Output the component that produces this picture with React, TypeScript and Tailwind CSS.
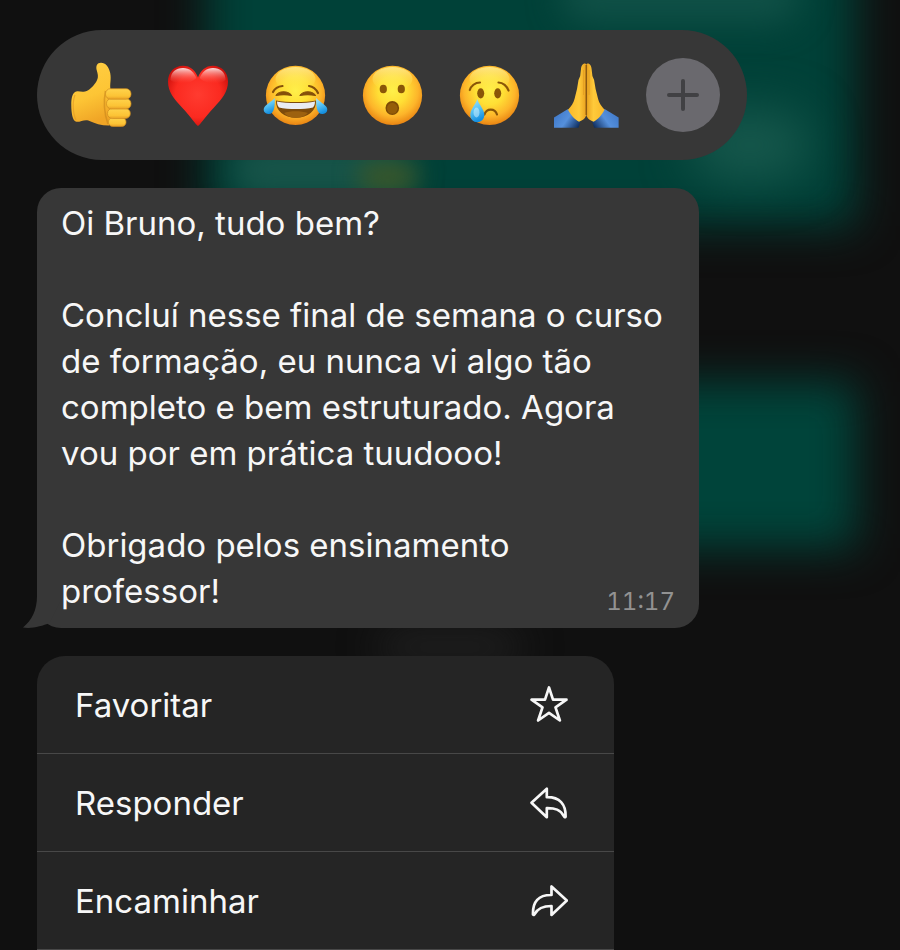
import React from 'react';

interface IconProps {
    className?: string;
}

const Face: React.FC<{ id: string; children: React.ReactNode }> = ({ id, children }) => (
    <svg className="w-[72px] h-[72px]" viewBox="0 0 72 72" fill="none" aria-hidden="true">
        <defs>
            <radialGradient id={`${id}-base`} cx="0.5" cy="0.42" r="0.6">
                <stop offset="0" stopColor="#fff04a" />
                <stop offset="0.4" stopColor="#ffdf35" />
                <stop offset="0.72" stopColor="#fdb52a" />
                <stop offset="1" stopColor="#e67e10" />
            </radialGradient>
            <linearGradient id={`${id}-shine`} x1="0" y1="0" x2="0" y2="1">
                <stop offset="0" stopColor="#fff3a0" stopOpacity="0.75" />
                <stop offset="1" stopColor="#ffe94a" stopOpacity="0" />
            </linearGradient>
            <linearGradient id={`${id}-tear`} x1="0" y1="0" x2="0.3" y2="1">
                <stop offset="0" stopColor="#a8e6ff" />
                <stop offset="0.5" stopColor="#5cc5f5" />
                <stop offset="1" stopColor="#1690e0" />
            </linearGradient>
        </defs>
        <circle cx="36.5" cy="36.4" r="29.6" fill={`url(#${id}-base)`} />
        <ellipse cx="36.5" cy="20" rx="20" ry="12" fill={`url(#${id}-shine)`} />
        {children}
    </svg>
);

const ThumbsUp = () => (
    <svg className="w-[72px] h-[72px]" viewBox="0 0 72 72" fill="none" aria-hidden="true">
        <defs>
            <linearGradient id="thumb-skin" x1="0" y1="0" x2="0.3" y2="1">
                <stop offset="0" stopColor="#ffcf45" />
                <stop offset="0.6" stopColor="#fdc535" />
                <stop offset="1" stopColor="#f0a526" />
            </linearGradient>
            <linearGradient id="thumb-finger" x1="0" y1="0" x2="0" y2="1">
                <stop offset="0" stopColor="#ffd34c" />
                <stop offset="0.7" stopColor="#fcc335" />
                <stop offset="1" stopColor="#e79f25" />
            </linearGradient>
        </defs>
        <path
            d="M36 3.700C32 3.700 30.600 7 31.800 11.500C33.500 17 33.500 20 30 24.500C26.500 29 23 32.500 18.500 32.800C15 33 12.500 31.500 10 33C7 35 6.300 40 6.300 46C6.300 54 7.500 61 10.700 62.500C14 63.800 19 60 23.300 61.500C30 64.500 36 66.500 44 66.500L50 62L52 31L45.500 30C44.500 25 46.500 21 45.200 14C43.800 7.500 40.500 3.700 36 3.700Z"
            fill="url(#thumb-skin)"
        />
        <path d="M10 36C7.500 42 7.500 54 11 61" stroke="#e29b25" strokeWidth="1.2" opacity="0.7" />
        <path d="M40.500 32C38.500 42 39.500 55 43 65" stroke="#c8851b" strokeWidth="1.6" opacity="0.6" />
        <rect x="43.500" y="58.500" width="17.500" height="9" rx="4.300" fill="url(#thumb-finger)" stroke="#d08d20" strokeWidth="0.700" />
        <rect x="42.500" y="49.500" width="22.800" height="10" rx="4.800" fill="url(#thumb-finger)" stroke="#d08d20" strokeWidth="0.700" />
        <rect x="41.500" y="39.500" width="24.500" height="10.500" rx="5" fill="url(#thumb-finger)" stroke="#d08d20" strokeWidth="0.700" />
        <rect x="40.500" y="29.700" width="25.500" height="10.500" rx="5" fill="url(#thumb-finger)" stroke="#d08d20" strokeWidth="0.700" />
    </svg>
);

const Heart = () => (
    <svg className="w-[72px] h-[72px]" viewBox="0 0 72 72" fill="none" aria-hidden="true">
        <defs>
            <radialGradient id="heart-base" cx="0.5" cy="0.48" r="0.58">
                <stop offset="0" stopColor="#ff3b30" />
                <stop offset="0.65" stopColor="#fb2a20" />
                <stop offset="1" stopColor="#cd100c" />
            </radialGradient>
            <linearGradient id="heart-shine" x1="0" y1="0" x2="0" y2="1">
                <stop offset="0" stopColor="#fff" stopOpacity="0.85" />
                <stop offset="1" stopColor="#ff5a4e" stopOpacity="0" />
            </linearGradient>
        </defs>
        <path
            d="M36 67C34 66 28.500 57.500 20 48.500C12 40 6 33 6 22.500C6 13 12.500 6.700 21 6.700C28.500 6.700 33.500 11.500 36 18.500C38.500 11.500 43.500 6.700 51 6.700C59.500 6.700 66 13 66 22.500C66 33 60 40 52 48.500C43.500 57.500 38 66 36 67Z"
            fill="url(#heart-base)"
        />
        <path d="M8.500 21C8.500 13 14 9 21 9C27.500 9 32 13 34.300 19C29 25 14 26 8.500 21Z" fill="url(#heart-shine)" />
        <path d="M37.700 19C40 13 44.500 9 51 9C58 9 63.500 13 63.500 21C58 26 43 25 37.700 19Z" fill="url(#heart-shine)" />
    </svg>
);

const Joy = () => (
    <Face id="joy">
        <g stroke="#85500a" strokeWidth="2.200" strokeLinecap="round">
            <path d="M14 33C15.500 30 19 27.500 23.500 27" />
            <path d="M50 27C54 27.500 57 30 59 34" />
        </g>
        <path d="M17 36.500C20 31.500 29 31.500 32.500 36.500C28 35.500 22 35.500 17 36.500Z" fill="#85500a" stroke="#85500a" strokeWidth="1.200" strokeLinejoin="round" />
        <path d="M41 36.500C44.500 31.500 53 31.500 56.500 36.500C52 35.500 45.500 35.500 41 36.500Z" fill="#85500a" stroke="#85500a" strokeWidth="1.200" strokeLinejoin="round" />
        <path d="M17 41.500C28 43.500 46 43.500 57 41.500C57.500 52 49 58.800 37 58.800C25 58.800 16.500 52 17 41.500Z" fill="#7c4a0b" />
        <path d="M25 54C31 51.500 42 51.500 49 54C42 60.500 31 60.500 25 54Z" fill="#9c610f" />
        <path d="M18 42.500C28 44.500 46 44.500 56 42.500C56 45 55.300 47 54 48.500C45 50.500 29 50.500 20 48.500C18.700 47 18 45 18 42.500Z" fill="#e9ebf2" />
        <path d="M15.800 39C16 47 15.500 55 9.500 55C5.500 55 3.500 51 5.500 48C7.500 45 12 43 15.800 39Z" fill="url(#joy-tear)" />
        <path d="M57.200 39C57 47 57.500 55 63.500 55C67.500 55 69.500 51 67.500 48C65.500 45 61 43 57.200 39Z" fill="url(#joy-tear)" />
    </Face>
);

const Surprised = () => (
    <Face id="surprised">
        <ellipse cx="27.300" cy="30" rx="3.600" ry="4.300" fill="#8a5608" />
        <ellipse cx="45.300" cy="30" rx="3.600" ry="4.300" fill="#8a5608" />
        <ellipse cx="36.300" cy="49" rx="6.800" ry="7" fill="#7c4a06" />
        <ellipse cx="36.300" cy="49.300" rx="5.300" ry="5.500" fill="#955d08" />
    </Face>
);

const Crying = () => (
    <Face id="crying">
        <g stroke="#8a5608" strokeWidth="2.200" strokeLinecap="round">
            <path d="M16.800 31C18 27 22 23.500 27 23.500" />
            <path d="M45.500 23.500C50 23.500 54 27 55.500 31.500" />
            <path d="M31.500 55.500C33.500 49 42 49 44 55.500" />
        </g>
        <ellipse cx="27.700" cy="34.300" rx="3.500" ry="5.100" fill="#8a5608" />
        <ellipse cx="44.700" cy="34.300" rx="3.500" ry="5.100" fill="#8a5608" />
        <path d="M24.300 40C26 46 31.300 50 31.300 56C31.300 60.500 28 63.200 24.300 63.200C20.500 63.200 17.300 60.500 17.300 56C17.300 50 22.500 46 24.300 40Z" fill="url(#crying-tear)" />
        <ellipse cx="23.500" cy="53.500" rx="3" ry="5" fill="#dcf5ff" opacity="0.5" />
    </Face>
);

const FoldedHands = () => (
    <svg className="w-[72px] h-[72px]" viewBox="0 0 72 72" fill="none" aria-hidden="true">
        <defs>
            <linearGradient id="hands-skin" x1="0" y1="0" x2="1" y2="0">
                <stop offset="0" stopColor="#f9b82a" />
                <stop offset="0.6" stopColor="#ffca3a" />
                <stop offset="1" stopColor="#e9a01e" />
            </linearGradient>
            <linearGradient id="hands-sleeve" x1="0" y1="0.3" x2="1" y2="0.8">
                <stop offset="0" stopColor="#3f78c8" />
                <stop offset="0.5" stopColor="#5590dc" />
                <stop offset="1" stopColor="#102f60" />
            </linearGradient>
            <g id="hands-half">
                <path d="M18 50L4 58.500V68.700H28.500L30.500 62.500Z" fill="url(#hands-sleeve)" />
                <path d="M35 4.500C32.500 4.500 31.200 7 31 10L30.200 17L28.500 21L27 30L24.500 40C23.500 44 21 47.500 18 50.800C20.500 55.500 24.500 60.500 29 62.800C33.500 61 36.500 58.500 36.500 54V7C36.500 5.500 36 4.500 35 4.500Z" fill="url(#hands-skin)" />
            </g>
        </defs>
        <use href="#hands-half" />
        <use href="#hands-half" transform="matrix(-1 0 0 1 72.600 0)" />
        <path d="M36.300 6V56" stroke="#8f5a10" strokeWidth="1.500" />
        <path d="M33.500 11V36M39.100 11V36" stroke="#d9921f" strokeWidth="0.800" opacity="0.6" />
    </svg>
);

const StarIcon: React.FC<IconProps> = ({ className }) => (
    <svg className={className} viewBox="0 0 40 40" fill="none" stroke="currentColor" strokeWidth="2.7" strokeLinejoin="round" aria-hidden="true">
        <path d="M21 2.500L25 14.700H38.500L27.500 22.400L31.900 35.500L21 27.800L10.100 35.500L14.500 22.400L3.500 14.700H17Z" />
    </svg>
);

const ReplyIcon: React.FC<IconProps> = ({ className }) => (
    <svg className={className} viewBox="0 0 40 40" fill="none" stroke="currentColor" strokeWidth="2.7" strokeLinejoin="round" aria-hidden="true">
        <path d="M3.500 19.700L18.800 5.700V14.200C31.500 14 38 21 37.600 33.800C36.800 34.400 36.200 34 35.700 33C32.500 26.500 27 25.100 18.800 25.200V34.200Z" />
    </svg>
);

const ForwardIcon: React.FC<IconProps> = ({ className }) => (
    <svg className={className} viewBox="0 0 40 40" fill="none" stroke="currentColor" strokeWidth="2.7" strokeLinejoin="round" aria-hidden="true">
        <path d="M38.800 19.500L23.500 5.500V14C10.500 13.800 4.500 20.500 5 33.500C5.600 34.300 6.300 34 6.800 33C10 26.500 15.500 25 23.500 25V34Z" />
    </svg>
);

const reactions = [
    { label: 'Curtir', Icon: ThumbsUp },
    { label: 'Amei', Icon: Heart },
    { label: 'Haha', Icon: Joy },
    { label: 'Uau', Icon: Surprised },
    { label: 'Triste', Icon: Crying },
    { label: 'Gratidão', Icon: FoldedHands },
];

const actions = [
    { label: 'Favoritar', Icon: StarIcon },
    { label: 'Responder', Icon: ReplyIcon },
    { label: 'Encaminhar', Icon: ForwardIcon },
];

// Blurred chat that sits behind the open message
const Backdrop = () => (
    <div className="absolute inset-0 overflow-hidden" aria-hidden="true">
        <div className="absolute -top-16 left-[206px] w-[650px] h-[290px] bg-[#004138] blur-[22px]" />
        <div className="absolute -top-8 left-[560px] w-[240px] h-[56px] rounded-full bg-[#0f5046] blur-[16px]" />
        <div className="absolute top-[110px] left-[690px] w-[120px] h-[70px] rounded-full bg-[#16584c] blur-[24px]" />
        <div className="absolute top-[140px] left-[230px] w-[180px] h-[60px] rounded-full bg-[#175449] blur-[16px]" />
        <div className="absolute top-[162px] left-[358px] w-[60px] h-[30px] rounded-full bg-[#3a5628] blur-[12px]" />
        <div className="absolute top-[382px] left-[560px] w-[296px] h-[166px] bg-[#00443a] blur-[22px]" />
        <div className="absolute top-[632px] left-[380px] w-[140px] h-[30px] rounded-full bg-[#232323] blur-[20px]" />
    </div>
);

export default function App() {
    return (
        <main className="relative min-h-screen overflow-hidden bg-[#101010] pt-[30px] pl-[37px] pr-6 font-[Inter,'Liberation_Sans',sans-serif] text-[#f7f7f7]">
            <Backdrop />
            <div className="relative flex flex-col gap-7">
                <div className="grid grid-cols-7 items-center justify-items-center w-full max-w-[710px] h-[130px] px-4 rounded-full bg-[#373737]">
                    {reactions.map(({ label, Icon }) => (
                        <button key={label} type="button" aria-label={label} className="cursor-pointer">
                            <Icon />
                        </button>
                    ))}
                    <button
                        type="button"
                        aria-label="Mais reações"
                        className="flex items-center justify-center w-[74px] h-[74px] rounded-full bg-[#6a696e] text-[#414144] cursor-pointer"
                    >
                        <svg className="w-8 h-8" viewBox="0 0 32 32" fill="none" stroke="currentColor" strokeWidth="4" strokeLinecap="round">
                            <path d="M16 2v28M2 16h28" />
                        </svg>
                    </button>
                </div>

                <article className="relative w-full max-w-[662px] rounded-3xl bg-[#373737] px-6 pt-3 pb-[14px] text-[33px] leading-[46px]">
                    <svg className="absolute bottom-0 -left-[14px] w-10 h-8 text-[#373737]" viewBox="0 0 40 32" fill="currentColor" aria-hidden="true">
                        <path d="M14 0C14 14 9 24 0 31.500C9 33 19 30 26.500 27L40 0Z" />
                    </svg>
                    <div className="relative flex flex-col gap-[46px]">
                        <p>Oi Bruno, tudo bem?</p>
                        <p>Concluí nesse final de semana o curso de formação, eu nunca vi algo tão completo e bem estruturado. Agora vou por em prática tuudooo!</p>
                        <div className="flex items-end justify-between gap-6">
                            <p>Obrigado pelos ensinamento professor!</p>
                            <time className="text-2xl leading-6 tabular-nums text-[#929292]">11:17</time>
                        </div>
                    </div>
                </article>

                <div className="w-full max-w-[577px] overflow-hidden rounded-t-[28px] bg-[#252525]">
                    {actions.map(({ label, Icon }) => (
                        <button
                            key={label}
                            type="button"
                            className="flex items-center justify-between w-full h-[98px] pl-[38px] pr-[46px] border-b border-[#484848] text-[33px] leading-[46px] cursor-pointer"
                        >
                            {label}
                            <Icon className="w-10 h-10" />
                        </button>
                    ))}
                </div>
            </div>
        </main>
    );
}
